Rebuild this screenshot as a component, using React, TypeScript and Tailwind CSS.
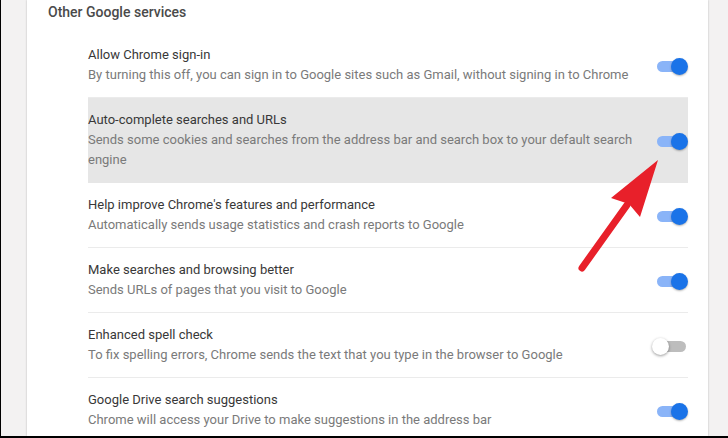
import React from "react";

type Row = { title: string; desc: string; on: boolean; highlight?: boolean };

const rows: Row[] = [
  {
    title: "Allow Chrome sign-in",
    desc: "By turning this off, you can sign in to Google sites such as Gmail, without signing in to Chrome",
    on: true,
  },
  {
    title: "Auto-complete searches and URLs",
    desc: "Sends some cookies and searches from the address bar and search box to your default search engine",
    on: true,
    highlight: true,
  },
  {
    title: "Help improve Chrome's features and performance",
    desc: "Automatically sends usage statistics and crash reports to Google",
    on: true,
  },
  {
    title: "Make searches and browsing better",
    desc: "Sends URLs of pages that you visit to Google",
    on: true,
  },
  {
    title: "Enhanced spell check",
    desc: "To fix spelling errors, Chrome sends the text that you type in the browser to Google",
    on: false,
  },
  {
    title: "Google Drive search suggestions",
    desc: "Chrome will access your Drive to make suggestions in the address bar",
    on: true,
  },
];

function Toggle({ on }: { on: boolean }) {
  return (
    <div className="relative w-[32px] h-[17px] shrink-0 mt-[2px]">
      <div
        className={
          on
            ? "absolute left-[1px] right-[2px] top-[3px] h-[11px] rounded-full bg-[#8ab4f8]"
            : "absolute left-[1px] right-[2px] top-[3px] h-[11px] rounded-full bg-[#bdbdbd]"
        }
      />
      {on ? (
        <div className="absolute right-0 top-0 w-[17px] h-[17px] rounded-full bg-[#1a73e8] shadow-[0_1px_2px_rgba(0,0,0,0.3)]" />
      ) : (
        <div className="absolute left-[-4px] top-0 w-[17px] h-[17px] rounded-full bg-white shadow-[0_1px_3px_rgba(0,0,0,0.4)]" />
      )}
    </div>
  );
}

export default function App() {
  return (
    <div
      className="relative w-[728px] h-[438px] overflow-hidden bg-[#f3f2f2] border-l border-b-2 border-black flex"
      style={{ fontFamily: "Roboto, 'Liberation Sans', sans-serif" }}
    >
      <div className="ml-[26px] w-[681px] h-full bg-white shadow-[0_0_2px_rgba(0,0,0,0.25)] flex flex-col overflow-hidden">
        <div className="h-[33px] shrink-0 pl-[21px] pt-[2px] text-[14px] leading-[20px] font-medium text-[#4a4a4a]">
          Other Google services
        </div>
        <div className="ml-[61px] mr-[20px] flex flex-col shrink-0">
          {rows.map((r, i) => (
            <div
              key={i}
              className={
                r.highlight
                  ? "flex items-center gap-4 py-[12px] border-b border-[#e6e6e6] bg-[#e6e6e6] shrink-0"
                  : "flex items-center gap-4 py-[12px] border-b border-[#ebebeb] shrink-0"
              }
            >
              <div className="flex-1 min-w-0 text-[13px] leading-[20px]">
                <div className="text-[#383838]">{r.title}</div>
                <div className="text-[#7a7a7a]">{r.desc}</div>
              </div>
              <Toggle on={r.on} />
            </div>
          ))}
        </div>
      </div>
      <svg
        className="absolute left-0 top-0 pointer-events-none"
        width="728"
        height="438"
        viewBox="0 0 728 438"
      >
        <line
          x1="581"
          y1="268"
          x2="626"
          y2="205"
          stroke="#e8202a"
          strokeWidth="7"
          strokeLinecap="round"
        />
        <polygon points="657,160 639,217 628,204 610,198" fill="#e8202a" />
      </svg>
    </div>
  );
}
